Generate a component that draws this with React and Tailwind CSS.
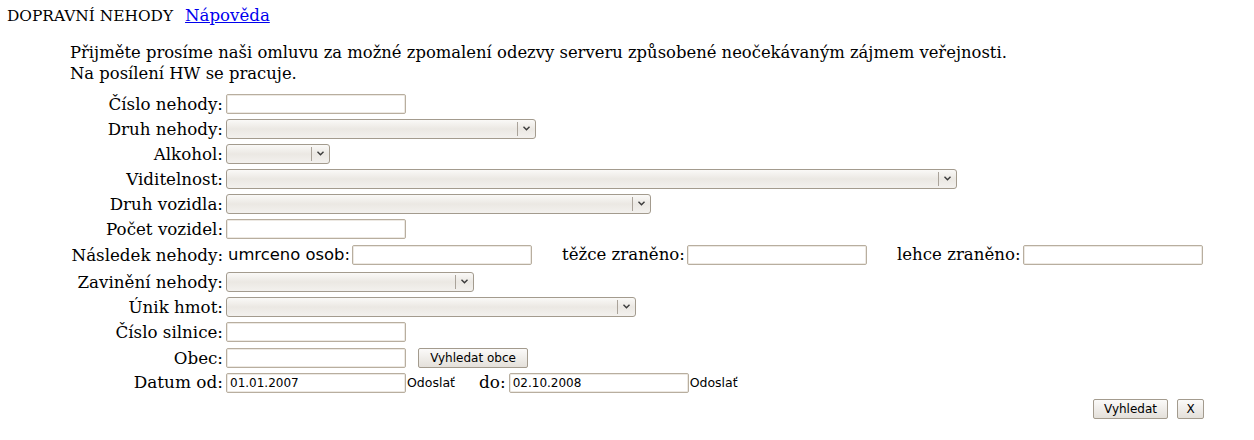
import React from "react";

const serif = { fontFamily: '"DejaVu Serif", serif' };
const sans = { fontFamily: '"DejaVu Sans", sans-serif' };

function TextBox({ value = "", w = "w-[180px]" }) {
  return (
    <div
      className={`${w} h-[20px] border border-[#b8ae9f] bg-white rounded-[2px] shadow-[inset_0_0_0_1px_#ede9e3] px-[3px] flex items-center text-[12px] text-black`}
      style={sans}
    >
      {value}
    </div>
  );
}

function Select({ w }) {
  return (
    <div
      className={`${w} h-[20px] border border-[#a39b8e] rounded-[3px] bg-gradient-to-b from-[#faf9f7] via-[#ebe8e3] to-[#f3f1ee] flex items-center justify-end`}
    >
      <div className="h-[14px] w-px bg-[#aaa39a]" />
      <div className="w-[17px] flex items-center justify-center">
        <svg width="7" height="5" viewBox="0 0 7 5">
          <polyline points="0.5,0.8 3.5,3.8 6.5,0.8" fill="none" stroke="#3a3a3a" strokeWidth="1.4" />
        </svg>
      </div>
    </div>
  );
}

function Button({ children, w }) {
  return (
    <div
      className={`${w} h-[20px] border border-[#a39b8e] rounded-[2px] bg-gradient-to-b from-[#fbfaf9] to-[#e4e0da] flex items-center justify-center text-[12px] text-black`}
      style={sans}
    >
      {children}
    </div>
  );
}

function Row({ label, children, mt = "mt-[5px]", size = "text-[16.7px]" }) {
  return (
    <div className={`flex items-center h-[20px] ${mt}`}>
      <div className={`w-[223px] text-right ${size} leading-none text-black`} style={serif}>
        {label}
      </div>
      <div className="ml-[3px] flex items-center">{children}</div>
    </div>
  );
}

export default function App() {
  const odoslat = (
    <span className="text-[12.5px] ml-[1px]" style={sans}>
      Odoslať
    </span>
  );
  return (
    <div className="w-[1254px] h-[440px] bg-white text-black" style={serif}>
      <div className="pt-[4px] pl-[7px] text-[15.4px] flex items-baseline gap-[12px]">
        <span>DOPRAVNÍ NEHODY</span>
        <a href="#" className="text-[#0000ee] underline text-[16.6px]">
          Nápověda
        </a>
      </div>
      <div className="mt-[13px] ml-[70px] text-[16.4px] leading-[21px]">
        <div>Přijměte prosíme naši omluvu za možné zpomalení odezvy serveru způsobené neočekávaným zájmem veřejnosti.</div>
        <div>Na posílení HW se pracuje.</div>
      </div>
      <div className="mt-[10px]">
        <Row label="Číslo nehody:" mt="mt-0">
          <TextBox />
        </Row>
        <Row label="Druh nehody:">
          <Select w="w-[310px]" />
        </Row>
        <Row label="Alkohol:">
          <Select w="w-[104px]" />
        </Row>
        <Row label="Viditelnost:">
          <Select w="w-[731px]" />
        </Row>
        <Row label="Druh vozidla:">
          <Select w="w-[425px]" />
        </Row>
        <Row label="Počet vozidel:">
          <TextBox />
        </Row>
        <div className="flex items-center h-[21px] mt-[6px]">
          <div className="w-[223px] text-right leading-none text-[16.7px]" style={serif}>
            Následek nehody:
          </div>
          <div className="ml-[5px] flex items-center">
            <span style={sans} className="text-[16.4px]">
              umrceno osob:
            </span>
            <div className="ml-[2px]">
              <TextBox />
            </div>
            <span className="ml-[30px] text-[16.6px]" style={serif}>
              těžce zraněno:
            </span>
            <div className="ml-[2px]">
              <TextBox />
            </div>
            <span className="ml-[30px] text-[16.6px]" style={serif}>
              lehce zraněno:
            </span>
            <div className="ml-[2px]">
              <TextBox />
            </div>
          </div>
        </div>
        <Row label="Zavinění nehody:" mt="mt-[6px]">
          <Select w="w-[248px]" />
        </Row>
        <Row label="Únik hmot:">
          <Select w="w-[410px]" />
        </Row>
        <Row label="Číslo silnice:">
          <TextBox />
        </Row>
        <Row label="Obec:" mt="mt-[6px]">
          <TextBox />
          <div className="ml-[12px]">
            <Button w="w-[110px]">Vyhledat obce</Button>
          </div>
        </Row>
        <Row label="Datum od:" size="text-[16.9px]">
          <TextBox value="01.01.2007" />
          {odoslat}
          <span className="ml-[24px] text-[16.9px]">do:</span>
          <div className="ml-[3px]">
            <TextBox value="02.10.2008" />
          </div>
          {odoslat}
        </Row>
        <div className="flex justify-end gap-[9px] mt-[6px] pr-[50px]">
          <Button w="w-[75px]">Vyhledat</Button>
          <Button w="w-[27px]">X</Button>
        </div>
      </div>
    </div>
  );
}
